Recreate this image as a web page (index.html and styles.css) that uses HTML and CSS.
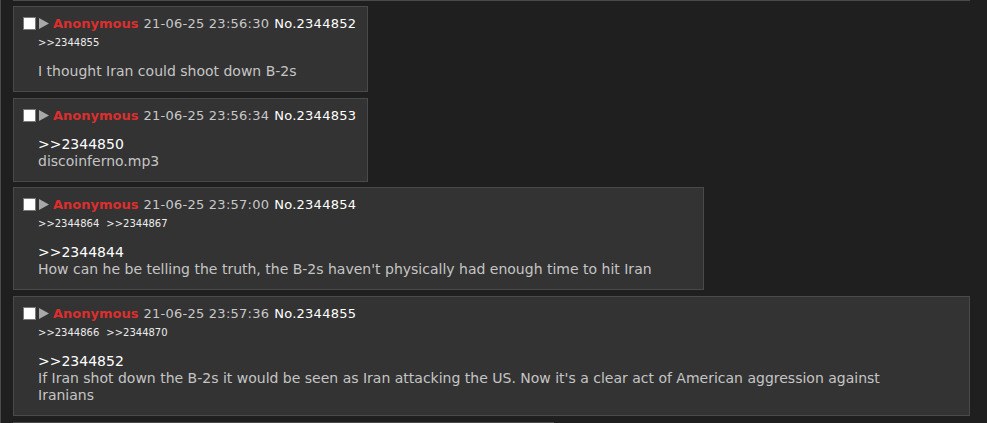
FILE: index.html
```html
<!DOCTYPE html>
<html lang="en">
<head>
  <meta charset="UTF-8" />
  <meta name="viewport" content="width=device-width, initial-scale=1.0" />
  <title>Thread</title>
  <link rel="stylesheet" href="styles.css">
</head>
<body>
  <div class="thread">
    <div class="post-edge full"></div>

    <div class="post">
      <div class="post-info">
        <input type="checkbox" class="select" />
        <svg class="expand" width="10" height="11" viewBox="0 0 10 11"><polygon points="0,0 10,5.5 0,11" /></svg>
        <span class="name">Anonymous</span>
        <span class="date">21-06-25 23:56:30</span>
        <span class="num">No.2344852</span>
      </div>
      <div class="backlinks"><a href="#">&gt;&gt;2344855</a></div>
      <blockquote class="message">I thought Iran could shoot down B-2s</blockquote>
    </div>

    <div class="post">
      <div class="post-info">
        <input type="checkbox" class="select" />
        <svg class="expand" width="10" height="11" viewBox="0 0 10 11"><polygon points="0,0 10,5.5 0,11" /></svg>
        <span class="name">Anonymous</span>
        <span class="date">21-06-25 23:56:34</span>
        <span class="num">No.2344853</span>
      </div>
      <blockquote class="message"><a href="#" class="quotelink">&gt;&gt;2344850</a><br>discoinferno.mp3</blockquote>
    </div>

    <div class="post">
      <div class="post-info">
        <input type="checkbox" class="select" />
        <svg class="expand" width="10" height="11" viewBox="0 0 10 11"><polygon points="0,0 10,5.5 0,11" /></svg>
        <span class="name">Anonymous</span>
        <span class="date">21-06-25 23:57:00</span>
        <span class="num">No.2344854</span>
      </div>
      <div class="backlinks"><a href="#">&gt;&gt;2344864</a><a href="#">&gt;&gt;2344867</a></div>
      <blockquote class="message"><a href="#" class="quotelink">&gt;&gt;2344844</a><br>How can he be telling the truth, the B-2s haven't physically had enough time to hit Iran</blockquote>
    </div>

    <div class="post">
      <div class="post-info">
        <input type="checkbox" class="select" />
        <svg class="expand" width="10" height="11" viewBox="0 0 10 11"><polygon points="0,0 10,5.5 0,11" /></svg>
        <span class="name">Anonymous</span>
        <span class="date">21-06-25 23:57:36</span>
        <span class="num">No.2344855</span>
      </div>
      <div class="backlinks"><a href="#">&gt;&gt;2344866</a><a href="#">&gt;&gt;2344870</a></div>
      <blockquote class="message"><a href="#" class="quotelink">&gt;&gt;2344852</a><br>If Iran shot down the B-2s it would be seen as Iran attacking the US. Now it's a clear act of American aggression against Iranians</blockquote>
    </div>

    <!-- next post, only its top edge is in view -->
    <div class="post-edge next"></div>
  </div>
</body>
</html>
```

FILE: styles.css
```css
body {
  margin: 0;
  background: #1f1f1f;
  border-left: 1px solid #4a4a4a;
  font-family: "DejaVu Sans", Verdana, sans-serif;
  color: #c5c5c5;
  min-height: 423px;
  box-sizing: border-box;
}
.thread {
  margin-left: 12px;
  width: 957px;
  display: flex;
  flex-direction: column;
  align-items: flex-start;
}
.post-edge {
  background: #333333;
  border: 0 solid #4a4a4a;
}
.post-edge.full {
  width: 957px;
  border-bottom-width: 1px;
  margin-bottom: 5px;
}
.post-edge.next {
  width: 541px;
  height: 4px;
  border-top-width: 1px;
}
.post {
  background: #333333;
  border: 1px solid #4a4a4a;
  padding: 7px 11px 11px 9px;
  margin-bottom: 6px;
  max-width: 100%;
  box-sizing: border-box;
}
.post:nth-of-type(3) {
  margin-bottom: 5px;
}
.post-info {
  display: flex;
  align-items: center;
  height: 18px;
  font-size: 13px;
  white-space: nowrap;
}
.select {
  appearance: none;
  -webkit-appearance: none;
  width: 13px;
  height: 13px;
  margin: 0 3px 0 0;
  background: #ffffff;
  border: 1px solid #7a7a7a;
  border-radius: 0;
}
.expand {
  fill: #a8a8a8;
  margin-right: 4px;
}
.name {
  color: #dd2e2e;
  font-weight: bold;
  margin-right: 5px;
}
.date {
  color: #c8c8c8;
  letter-spacing: 0.25px;
  margin-right: 5px;
}
.num {
  color: #ffffff;
  letter-spacing: 0.25px;
}
.backlinks {
  margin: 3px 0 0 15px;
  line-height: 16px;
  font-size: 10px;
}
.backlinks a {
  color: #ececec;
  text-decoration: none;
  margin-right: 7px;
}
.message {
  margin: 12px 40px 0 15px;
  font-size: 14px;
  line-height: 17px;
  color: #c5c5c5;
}
.quotelink {
  color: #ffffff;
  text-decoration: none;
}
```
